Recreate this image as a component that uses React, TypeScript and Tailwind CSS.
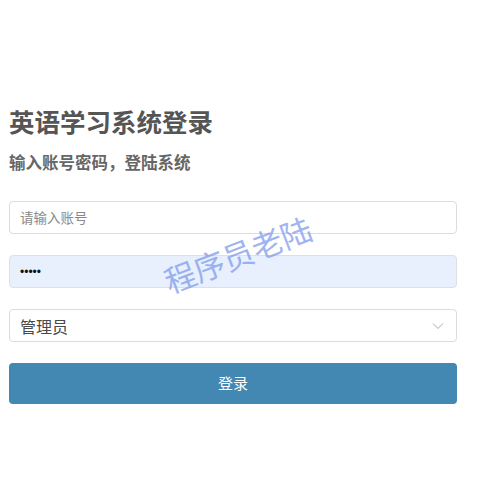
import React from "react";

export default function App() {
  const font = { fontFamily: '"Noto Sans CJK SC", "Noto Sans", sans-serif' };
  return (
    <div className="relative h-[500px] w-[500px] overflow-hidden bg-white" style={font}>
      <div className="ml-[9px] w-[448px] pt-[100px]">
        <h1 className="text-[25.5px] font-bold leading-[42px] text-[#555]">英语学习系统登录</h1>
        <p className="mt-[8px] text-[16.5px] font-bold leading-[24px] text-[#666]">输入账号密码，登陆系统</p>
        <div className="mt-[27px] flex h-[33px] items-center rounded-[4px] border border-[#dcdcdc] bg-white px-[10px] text-[13.5px] text-[#8a8a8a]">
          请输入账号
        </div>
        <div
          className="mt-[21px] flex h-[33px] items-center rounded-[4px] border border-[#dcdfe6] bg-[#e8f0fe] px-[10px] text-[12px] text-[#111]"
          style={{ fontFamily: '"Liberation Sans", Arial, sans-serif' }}
        >
          •••••
        </div>
        <div className="mt-[21px] flex h-[33px] items-center justify-between rounded-[4px] border border-[#dcdcdc] bg-white pl-[10px] pr-[12px] text-[16px] text-[#4a4a4a]">
          <span>管理员</span>
          <svg width="12" height="8" viewBox="0 0 12 8" fill="none">
            <path d="M1 1.5 L6 6.5 L11 1.5" stroke="#aaa" strokeWidth="1" />
          </svg>
        </div>
        <button className="mt-[21px] flex h-[41px] w-full items-center justify-center rounded-[4px] bg-[#4387b3] text-[15px] text-white">
          登录
        </button>
      </div>
      <div className="pointer-events-none absolute left-[160px] top-[238px] -rotate-[21deg] text-[31px] leading-none text-[#7f9cec] opacity-75">
        程序员老陆
      </div>
    </div>
  );
}
